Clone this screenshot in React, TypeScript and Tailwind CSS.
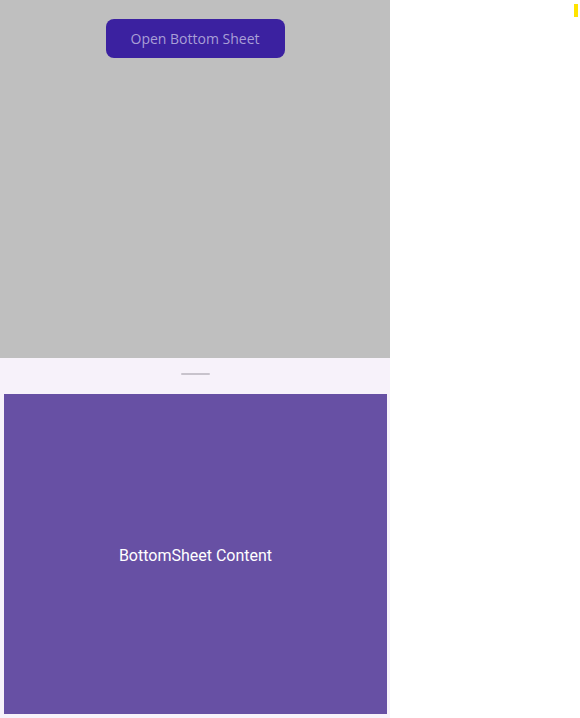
import React from 'react';

const App = () => {
  return (
    <div className="relative flex h-[718px] w-[580px] bg-white">
      <div className="flex h-full w-[390px] flex-col">
        <div className="flex h-[358px] flex-col items-center bg-[#bfbfbf] pt-[19px]">
          <button className="h-[39px] w-[179px] rounded-lg bg-[#3b21a0] font-['Open_Sans',sans-serif] text-[14px] text-[#a99fd6]">
            Open Bottom Sheet
          </button>
        </div>
        <div className="flex flex-1 flex-col bg-[#f7f2fa]">
          <div className="flex h-[36px] justify-center pt-[15px]">
            <div className="h-[2px] w-[29px] rounded-full bg-[#c8c3cc]" />
          </div>
          <div className="mb-[4px] ml-[4px] mr-[3px] flex flex-1 items-center justify-center bg-[#6750a4] pt-[3px]">
            <span className="font-['Roboto',sans-serif] text-[16px] text-white">BottomSheet Content</span>
          </div>
        </div>
      </div>
      <div className="absolute left-[574px] top-[4px] h-[13px] w-[4px] bg-[#ffe400]" />
    </div>
  );
};

export default App;
